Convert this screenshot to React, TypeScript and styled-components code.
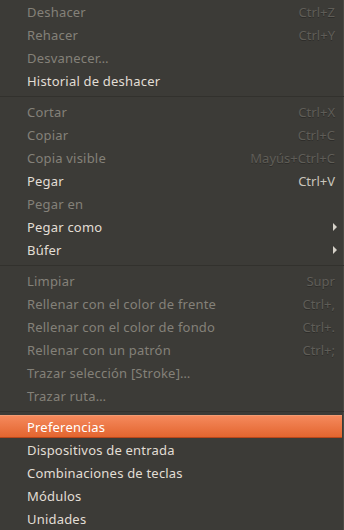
import styled, { createGlobalStyle } from 'styled-components';

const Global = createGlobalStyle`
  html, body {
    margin: 0;
    padding: 0;
    background: #3c3b37;
  }
`;

const Menu = styled.div`
  width: 344px;
  height: 530px;
  overflow: hidden;
  background: #3c3b37;
  box-shadow: inset -1px 0 0 #4a4943;
  font-family: "Noto Sans", "DejaVu Sans", sans-serif;
  font-size: 13px;
  letter-spacing: 0.2px;
  display: flex;
  flex-direction: column;
`;

const Row = styled.div<{ $disabled?: boolean; $active?: boolean }>`
  height: 23px;
  flex-shrink: 0;
  display: flex;
  align-items: center;
  padding: 0 7px 0 27px;
  margin-right: 2px;
  box-sizing: border-box;
  color: ${(p) => (p.$disabled ? '#848179' : '#e2ded5')};
  ${(p) =>
    p.$active &&
    `
    background: linear-gradient(#f5895c, #e3652f);
    border-top: 1px solid #f29b73;
    border-bottom: 1px solid #b9471b;
    color: #ffffff;
  `}
`;

const Label = styled.span`
  flex: 1;
  white-space: nowrap;
`;

const Shortcut = styled.span<{ $disabled?: boolean }>`
  letter-spacing: 0;
  color: ${(p) => (p.$disabled ? '#5f5d57' : '#c9c5bc')};
  text-shadow: ${(p) => (p.$disabled ? '0 1px 0 #2e2d2a' : 'none')};
`;

const Arrow = styled.span`
  width: 0;
  height: 0;
  margin-right: -2px;
  border-top: 4px solid transparent;
  border-bottom: 4px solid transparent;
  border-left: 4px solid #d6d2c9;
`;

const Separator = styled.div`
  height: 8px;
  flex-shrink: 0;
  display: flex;
  align-items: center;
  &::before {
    content: "";
    flex: 1;
    height: 1px;
    background: #32312d;
  }
`;

type Item =
  | { sep: true }
  | { label: string; shortcut?: string; disabled?: boolean; sub?: boolean; active?: boolean };

const items: Item[] = [
  { label: 'Deshacer', shortcut: 'Ctrl+Z', disabled: true },
  { label: 'Rehacer', shortcut: 'Ctrl+Y', disabled: true },
  { label: 'Desvanecer…', disabled: true },
  { label: 'Historial de deshacer' },
  { sep: true },
  { label: 'Cortar', shortcut: 'Ctrl+X', disabled: true },
  { label: 'Copiar', shortcut: 'Ctrl+C', disabled: true },
  { label: 'Copia visible', shortcut: 'Mayús+Ctrl+C', disabled: true },
  { label: 'Pegar', shortcut: 'Ctrl+V' },
  { label: 'Pegar en', disabled: true },
  { label: 'Pegar como', sub: true },
  { label: 'Búfer', sub: true },
  { sep: true },
  { label: 'Limpiar', shortcut: 'Supr', disabled: true },
  { label: 'Rellenar con el color de frente', shortcut: 'Ctrl+,', disabled: true },
  { label: 'Rellenar con el color de fondo', shortcut: 'Ctrl+.', disabled: true },
  { label: 'Rellenar con un patrón', shortcut: 'Ctrl+;', disabled: true },
  { label: 'Trazar selección [Stroke]…', disabled: true },
  { label: 'Trazar ruta…', disabled: true },
  { sep: true },
  { label: 'Preferencias', active: true },
  { label: 'Dispositivos de entrada' },
  { label: 'Combinaciones de teclas' },
  { label: 'Módulos' },
  { label: 'Unidades' },
];

export default function App() {
  return (
    <>
      <Global />
      <Menu>
        {items.map((it, i) =>
          'sep' in it ? (
            <Separator key={i} />
          ) : (
            <Row key={i} $disabled={it.disabled} $active={it.active}>
              <Label>{it.label}</Label>
              {it.shortcut && <Shortcut $disabled={it.disabled}>{it.shortcut}</Shortcut>}
              {it.sub && <Arrow />}
            </Row>
          )
        )}
      </Menu>
    </>
  );
}
